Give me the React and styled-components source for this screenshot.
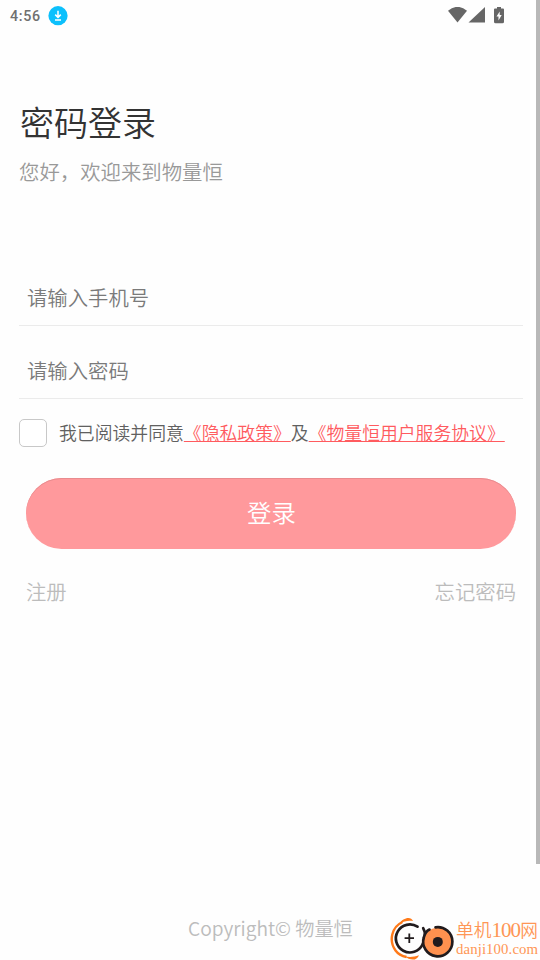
import React, { useState } from 'react'
import styled, { createGlobalStyle } from 'styled-components'

const GlobalStyle = createGlobalStyle`
	* {
		box-sizing: border-box;
	}
	body {
		margin: 0;
		background: #fefefe;
		font-family: 'Noto Sans CJK SC', sans-serif;
		font-weight: 350;
	}
`

const Screen = styled.div`
	position: relative;
	width: 540px;
	height: 960px;
	overflow: hidden;
	display: flex;
	flex-direction: column;
`

const StatusBar = styled.header`
	height: 32px;
	padding: 0 35px 0 10px;
	display: flex;
	align-items: center;
	justify-content: space-between;
`

const StatusGroup = styled.div`
	display: flex;
	align-items: center;
	gap: ${props => props.$gap || 0}px;
`

const Clock = styled.span`
	font: 500 14.3px/30px Roboto, sans-serif;
	letter-spacing: 0.7px;
	color: #707070;
`

const ScrollThumb = styled.div`
	position: absolute;
	top: 0;
	right: 0;
	width: 4px;
	height: 864px;
	background: #b8b8b8;
`

const Content = styled.main`
	flex: 1;
	padding: 70px 17px 0 19px;
`

const Title = styled.h1`
	margin: 0;
	padding-left: 1px;
	font-size: 34px;
	font-weight: 350;
	line-height: 40px;
	color: #333;
`

const Subtitle = styled.p`
	margin: 15px 0 68px;
	font-size: 20.4px;
	line-height: 28px;
	color: #999;
`

const Field = styled.div`
	height: 73px;
	padding: 30px 8px 0;
	border-bottom: 1px solid #ebebeb;
`

const Input = styled.input`
	display: block;
	width: 100%;
	height: 28px;
	padding: 0;
	border: 0;
	outline: 0;
	background: transparent;
	font-family: inherit;
	font-weight: inherit;
	font-size: 20.35px;
	line-height: 28px;
	color: #333;
	&::placeholder {
		color: #7a7a7a;
		opacity: 1;
	}
`

const Agreement = styled.label`
	display: flex;
	align-items: center;
	gap: 12px;
	margin-top: 20px;
	height: 28px;
	font-size: 17.84px;
	line-height: 26px;
	white-space: nowrap;
	color: #606060;
`

const AgreementText = styled.span`
	padding-bottom: 3px;
`

const Checkbox = styled.input`
	appearance: none;
	flex: none;
	width: 28px;
	height: 28px;
	margin: 0;
	border: 1px solid #c8c8c8;
	border-radius: 5px;
	background: #fff;
	&:checked {
		background: #ff5b5f;
	}
`

const Policy = styled.span`
	color: #ff5b5f;
	text-decoration: underline;
	text-decoration-thickness: 1px;
`

const LoginButton = styled.button`
	display: block;
	width: 490px;
	height: 71px;
	margin: 31px 0 0 7px;
	padding: 0 0 4px 1px;
	border: 0;
	border-radius: 36px;
	background: #ff999c;
	box-shadow: inset 0 1px 0 #e98b8e;
	font-family: inherit;
	font-weight: inherit;
	font-size: 24.4px;
	color: #fff;
`

const Links = styled.nav`
	display: flex;
	justify-content: space-between;
	margin: 28px 7px 0;
	font-size: 20.35px;
	line-height: 28px;
	color: #bcbcbc;
`

const Footer = styled.footer`
	position: relative;
	height: 47px;
	padding-left: 188px;
	font-size: 19.2px;
	line-height: 30px;
	color: #bcbcbc;
`

const Brand = styled.div`
	position: absolute;
	right: 2px;
	bottom: 0;
	height: 43px;
	display: flex;
	gap: 2px;
`

const BrandText = styled.div`
	width: 82px;
	padding-top: 2px;
	white-space: nowrap;
	color: #ff9655;
	font-family: 'Liberation Serif', 'Noto Sans CJK SC', serif;
`

const BrandName = styled.div`
	font-size: 17.7px;
	line-height: 22px;
`

const BrandNumber = styled.span`
	font-size: 21px;
	letter-spacing: -0.9px;
`

const BrandDomain = styled.div`
	font-size: 14.8px;
	line-height: 15px;
	letter-spacing: 0.1px;
`

const DownloadIcon = () => (
	<svg width="20" height="20" viewBox="0 0 20 20">
		<circle cx="10" cy="9.7" r="9.6" fill="#0cc0fc" />
		<path
			d="M10 4.7v6.5M7.2 8.6l2.8 2.8 2.8-2.8M7 13.9h6"
			fill="none"
			stroke="#fff"
			strokeWidth="1.5"
		/>
	</svg>
)

const SignalIcons = () => (
	<svg width="57" height="18" viewBox="0 0 57 18" fill="#666">
		<path d="M0 3.8Q9.5-4.1 19 3.8L9.5 15.5Z" />
		<path d="M37 0V15.5H20.5Z" />
		<path
			fillRule="evenodd"
			d="M49 0h4v1.600h2q1 0 1 1V14.700q0 1.500-1.500 1.500h-7Q46 16.200 46 14.700V2.600q0-1 1-1h2ZM51.700 4.500 48.500 9.500h2v4l3.200-5.500h-2Z"
		/>
	</svg>
)

const BrandLogo = () => (
	<svg width="64" height="43" viewBox="390 917 64 43" fill="none">
		<path
			d="M402.500 922C391.500 927 388.600 941 395.500 950.500c2.500 3.400 6 5.500 11 6.500"
			stroke="#ff7a1a"
			strokeWidth="2.400"
		/>
		<path
			d="M399.500 923.500c3-5.500 11.500-8 13.500-2.500-5-.8-9 .3-13.500 2.500ZM404 956c4.500 1.400 9.500 1.200 15-.8-2.500 6.300-9 5.200-15 .8Z"
			fill="#ff7a1a"
		/>
		<path
			d="M417.500 926.700A14 14 0 1 0 422.500 944.500C426.200 938 425.800 932.500 423.200 928.200"
			stroke="#211b1d"
			strokeWidth="2.700"
			strokeLinecap="round"
		/>
		<path d="M409.300 933.500v9.400M404.600 938.200h9.400" stroke="#211b1d" strokeWidth="1.800" />
		<circle cx="437.800" cy="941.700" r="14" fill="#ff914f" />
		<path
			d="M435.500 927.300A14.600 14.600 0 1 1 423.800 937.500C425 933 426.800 930.800 429.500 929.600"
			stroke="#211b1d"
			strokeWidth="2.700"
			strokeLinecap="round"
		/>
		<circle cx="437.800" cy="941.900" r="5" fill="#211b1d" />
	</svg>
)

const App = () => {
	const [phone, setPhone] = useState('')
	const [password, setPassword] = useState('')
	const [agreed, setAgreed] = useState(false)

	return (
		<Screen>
			<GlobalStyle />
			<StatusBar>
				<StatusGroup $gap={7}>
					<Clock>4:56</Clock>
					<DownloadIcon />
				</StatusGroup>
				<SignalIcons />
			</StatusBar>
			<Content>
				<Title>密码登录</Title>
				<Subtitle>您好，欢迎来到物量恒</Subtitle>
				<Field>
					<Input
						placeholder="请输入手机号"
						value={phone}
						onChange={e => setPhone(e.target.value)}
					/>
				</Field>
				<Field>
					<Input
						type="password"
						placeholder="请输入密码"
						value={password}
						onChange={e => setPassword(e.target.value)}
					/>
				</Field>
				<Agreement>
					<Checkbox
						type="checkbox"
						checked={agreed}
						onChange={e => setAgreed(e.target.checked)}
					/>
					<AgreementText>
						我已阅读并同意<Policy>《隐私政策》</Policy>及
						<Policy>《物量恒用户服务协议》</Policy>
					</AgreementText>
				</Agreement>
				<LoginButton>登录</LoginButton>
				<Links>
					<span>注册</span>
					<span>忘记密码</span>
				</Links>
			</Content>
			<Footer>
				Copyright© 物量恒
				<Brand>
					<BrandLogo />
					<BrandText>
						<BrandName>
							单机<BrandNumber>100</BrandNumber>网
						</BrandName>
						<BrandDomain>danji100.com</BrandDomain>
					</BrandText>
				</Brand>
			</Footer>
			<ScrollThumb />
		</Screen>
	)
}

export default App
